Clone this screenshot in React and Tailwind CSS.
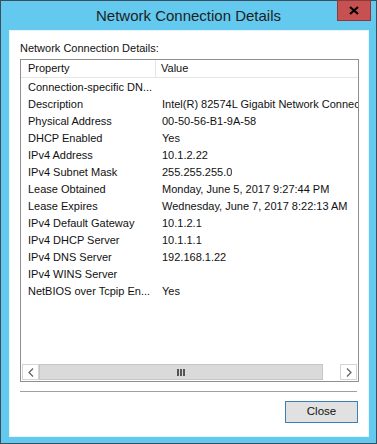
import React from "react";

const rows = [
  ["Connection-specific DN...", ""],
  ["Description", "Intel(R) 82574L Gigabit Network Connection"],
  ["Physical Address", "00-50-56-B1-9A-58"],
  ["DHCP Enabled", "Yes"],
  ["IPv4 Address", "10.1.2.22"],
  ["IPv4 Subnet Mask", "255.255.255.0"],
  ["Lease Obtained", "Monday, June 5, 2017 9:27:44 PM"],
  ["Lease Expires", "Wednesday, June 7, 2017 8:22:13 AM"],
  ["IPv4 Default Gateway", "10.1.2.1"],
  ["IPv4 DHCP Server", "10.1.1.1"],
  ["IPv4 DNS Server", "192.168.1.22"],
  ["IPv4 WINS Server", ""],
  ["NetBIOS over Tcpip En...", "Yes"],
];

export default function App() {
  return (
    <div
      className="w-[377px] h-[444px] bg-[#63c9ee] border border-[#3b4f5c] flex flex-col text-[#111]"
      style={{ fontFamily: '"Liberation Sans", Arial, sans-serif' }}
    >
      {/* title bar */}
      <div className="relative h-[29px] flex items-center justify-center">
        <span className="text-[15px] text-[#1e1e1e] pt-[1px]">Network Connection Details</span>
        <div className="absolute right-[5px] top-[-1px] w-[34px] h-[21px] bg-[#c75050] border border-[#8a3a3a] flex items-center justify-center">
          <svg width="10" height="9" viewBox="0 0 10 9">
            <path d="M1 1 L9 8 M9 1 L1 8" stroke="#000" strokeWidth="2.2" />
          </svg>
        </div>
      </div>

      {/* client area */}
      <div className="ml-[8px] w-[360px] h-[407px] bg-white border border-[#e8f6fc] flex flex-col">
        <div className="pl-[10px] pt-[9px] text-[11px] leading-[16px]">Network Connection Details:</div>

        <div className="ml-[10px] mt-[3px] w-[339px] h-[323px] border border-[#8f8f8f] flex flex-col text-[11px]">
          {/* header */}
          <div className="h-[18px] flex border-b border-[#e5e5e5] shrink-0">
            <div className="w-[135px] pl-[7px] leading-[17px] border-r border-[#e5e5e5]">Property</div>
            <div className="pl-[5px] leading-[17px]">Value</div>
          </div>

          {/* rows */}
          <div className="flex-1 flex flex-col overflow-hidden">
            {rows.map(([prop, value], i) => (
              <div key={i} className="h-[17px] flex shrink-0 whitespace-nowrap">
                <div className="w-[136px] pl-[7px] leading-[18px] shrink-0 overflow-hidden">{prop}</div>
                <div className="pl-[5px] leading-[18px] overflow-hidden">{value}</div>
              </div>
            ))}
          </div>

          {/* horizontal scrollbar */}
          <div className="h-[17px] flex shrink-0 items-stretch pl-[1px] pr-[1px] pb-[1px]">
            <div className="w-[17px] border border-[#d4d4d4] bg-white flex items-center justify-center">
              <svg width="6" height="9" viewBox="0 0 6 9">
                <path d="M5 0.5 L1 4.5 L5 8.5" stroke="#606060" strokeWidth="1.2" fill="none" />
              </svg>
            </div>
            <div className="w-[284px] bg-[#dadada] border border-[#c6c6c6] flex items-center justify-center gap-[1px]">
              <span className="w-[2px] h-[7px] bg-[#555]" />
              <span className="w-[2px] h-[7px] bg-[#555]" />
              <span className="w-[2px] h-[7px] bg-[#555]" />
            </div>
            <div className="flex-1 bg-white" />
            <div className="w-[17px] border border-[#d4d4d4] bg-white flex items-center justify-center">
              <svg width="6" height="9" viewBox="0 0 6 9">
                <path d="M1 0.5 L5 4.5 L1 8.5" stroke="#606060" strokeWidth="1.2" fill="none" />
              </svg>
            </div>
          </div>
        </div>

        {/* separator */}
        <div className="ml-[10px] mt-[9px] w-[337px] h-[2px] border-t border-[#a0a0a0] border-b-white" />

        <div className="flex justify-end pr-[10px] mt-[8px]">
          <div className="w-[73px] h-[22px] bg-[#e1e1e1] border border-[#3c7fb1] flex items-center justify-center text-[11.5px]">
            Close
          </div>
        </div>
      </div>
    </div>
  );
}
